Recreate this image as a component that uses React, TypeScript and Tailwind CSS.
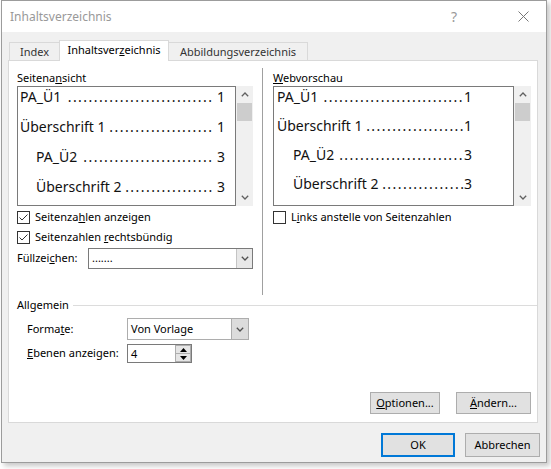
import React from 'react';

// Word-Dialog "Inhaltsverzeichnis" (Windows 10 Look)

type Entry = { text: string; page: string; level: number; dots: number };

// Anzahl der Füllpunkte je Zeile ist auf die Breite der Vorschau abgestimmt
const ENTRIES: Entry[] = [
  { text: 'PA_Ü1', page: '1', level: 0, dots: 28 },
  { text: 'Überschrift 1', page: '1', level: 0, dots: 20 },
  { text: 'PA_Ü2', page: '3', level: 1, dots: 25 },
  { text: 'Überschrift 2', page: '3', level: 1, dots: 17 },
];

const WEB_ENTRIES: Entry[] = [
  { text: 'PA_Ü1', page: '1', level: 0, dots: 27 },
  { text: 'Überschrift 1', page: '1', level: 0, dots: 19 },
  { text: 'PA_Ü2', page: '3', level: 1, dots: 24 },
  { text: 'Überschrift 2', page: '3', level: 1, dots: 16 },
  { text: 'PA_Ü3', page: '5', level: 2, dots: 21 },
];

function ChevronUp() {
  return (
    <svg width="8" height="5" viewBox="0 0 8 5">
      <path d="M0.8 4.2 L4 1 L7.2 4.2" fill="none" stroke="#606060" strokeWidth="1.3" />
    </svg>
  );
}

function ChevronDown({ color = '#606060' }: { color?: string }) {
  return (
    <svg width="8" height="5" viewBox="0 0 8 5">
      <path d="M0.8 0.8 L4 4 L7.2 0.8" fill="none" stroke={color} strokeWidth="1.3" />
    </svg>
  );
}

function Scrollbar() {
  return (
    <div className="flex h-full w-[17px] flex-col bg-[#f0f0f0]">
      <div className="flex h-[17px] items-center justify-center">
        <ChevronUp />
      </div>
      <div className="mx-[1px] h-[18px] bg-[#cdcdcd]" />
      <div className="flex-1" />
      <div className="flex h-[17px] items-center justify-center">
        <ChevronDown />
      </div>
    </div>
  );
}

function PreviewList({
  entries,
  indent,
  rowHeight,
  padLeft,
  padRight,
  web,
}: {
  entries: Entry[];
  indent: number;
  rowHeight: string;
  padLeft: number;
  padRight: string;
  web?: boolean;
}) {
  return (
    <div className={`h-full flex-1 overflow-hidden border border-[#7a7a7a] bg-white ${padRight}`}>
      {entries.map((e, i) => (
        <div
          key={i}
          className={`flex ${rowHeight} items-start text-[14px] leading-[20px] text-[#111]`}
          style={{ paddingLeft: padLeft + e.level * indent }}
        >
          <span className="whitespace-nowrap">{e.text}&nbsp;</span>
          <span className="min-w-0 flex-1 whitespace-nowrap text-right tracking-[1.45px]">
            {'.'.repeat(e.dots)}
          </span>
          <span className="whitespace-nowrap">
            {web ? '' : '\u00a0'}
            {e.page}
          </span>
        </div>
      ))}
    </div>
  );
}

function Checkbox({ checked, children }: { checked?: boolean; children: React.ReactNode }) {
  return (
    <div className="flex h-[16px] items-center">
      <div className="flex h-[13px] w-[13px] items-center justify-center border border-[#333] bg-white">
        {checked && (
          <svg width="11" height="11" viewBox="0 0 11 11">
            <path d="M1.5 5.5 L4 8 L9.5 2.5" fill="none" stroke="#333" strokeWidth="1" />
          </svg>
        )}
      </div>
      <span className="ml-[5px] whitespace-nowrap">{children}</span>
    </div>
  );
}

function Button({
  children,
  w,
  h,
  primary,
}: {
  children: React.ReactNode;
  w: string;
  h: string;
  primary?: boolean;
}) {
  return (
    <div
      className={`flex ${w} ${h} items-center justify-center bg-[#e1e1e1] ${
        primary ? 'border-2 border-[#0078d7]' : 'border border-[#adadad]'
      }`}
    >
      {children}
    </div>
  );
}

export default function App() {
  return (
    <div className="h-[469px] w-[551px] bg-white pl-px font-['Noto_Sans',sans-serif] text-[11px] text-black">
      <div className="flex h-[463px] w-[546px] flex-col border border-[#9c9c9c] shadow-[3px_3px_5px_rgba(0,0,0,0.22)]">
        {/* Titelleiste */}
        <div className="flex h-[31px] items-center bg-white pl-[8px]">
          <span className="text-[12px] text-[#999]">Inhaltsverzeichnis</span>
          <div className="ml-auto mr-[23px] flex w-[46px] justify-center text-[14px] text-[#999]">?</div>
          <div className="flex w-[46px] justify-center">
            <svg width="11" height="11" viewBox="0 0 11 11">
              <path d="M0.5 0.5 L10.5 10.5 M10.5 0.5 L0.5 10.5" stroke="#777" strokeWidth="1" />
            </svg>
          </div>
        </div>

        <div className="flex flex-1 flex-col bg-[#f0f0f0] px-[6px] pt-[8px]">
          {/* Reiter */}
          <div className="flex h-[21px] items-end">
            <div className="ml-px flex h-[19px] w-[51px] items-center justify-center border border-b-0 border-[#d9d9d9] text-[#333]">
              Index
            </div>
            <div className="relative z-10 -ml-px flex h-[21px] w-[110px] items-center justify-center border border-b-0 border-[#d9d9d9] bg-white pb-[2px]">
              Inhaltsver<u>z</u>eichnis
            </div>
            <div className="-ml-px flex h-[19px] w-[140px] items-center justify-center border border-b-0 border-[#d9d9d9] text-[#333]">
              Abbildungsverzeichnis
            </div>
          </div>

          {/* Registerinhalt */}
          <div className="-mt-px flex h-[363px] w-[530px] flex-col border border-[#d9d9d9] bg-white">
            <div className="flex">
              <div className="ml-[8px] flex w-[236px] flex-col">
                <div className="mt-[8px] h-[17px] leading-[17px]">
                  Seitena<u>n</u>sicht
                </div>
                <div className="flex h-[120px]">
                  <PreviewList entries={ENTRIES} indent={16} rowHeight="h-[30px]" padLeft={2} padRight="pr-[10px]" />
                  <Scrollbar />
                </div>
                <div className="mt-[3px]">
                  <Checkbox checked>
                    Seitenza<u>h</u>len anzeigen
                  </Checkbox>
                </div>
                <div className="mt-[4px]">
                  <Checkbox checked>
                    Seitenzahlen <u>r</u>echtsbündig
                  </Checkbox>
                </div>
                <div className="mt-[3px] flex h-[21px] items-center">
                  <span>
                    Füllzei<u>c</u>hen:
                  </span>
                  <div className="ml-auto flex h-full w-[165px] border border-[#7a7a7a] bg-white">
                    <span className="flex-1 pl-[3px] leading-[18px]">.......</span>
                    <div className="flex w-[16px] items-center justify-center border-l border-[#c4c4c4] bg-[#e8e8e8]">
                      <ChevronDown color="#505050" />
                    </div>
                  </div>
                </div>
              </div>

              <div className="ml-[9px] mt-[7px] h-[227px] w-px bg-[#a0a0a0]" />

              <div className="ml-[10px] flex w-[258px] flex-col">
                <div className="mt-[8px] h-[17px] leading-[17px]">
                  <u>W</u>ebvorschau
                </div>
                <div className="flex h-[120px]">
                  <PreviewList
                    entries={WEB_ENTRIES}
                    indent={16}
                    rowHeight="h-[29px]"
                    padLeft={3}
                    padRight="pr-[41px]"
                    web
                  />
                  <Scrollbar />
                </div>
                <div className="mt-[3px]">
                  <Checkbox>
                    L<u>i</u>nks anstelle von Seitenzahlen
                  </Checkbox>
                </div>
              </div>
            </div>

            {/* Allgemein */}
            <div className="mt-[2px] flex h-[16px] items-center pl-[8px]">
              <span>Allgemein</span>
              <div className="ml-[4px] h-px flex-1 bg-[#dcdcdc]" />
            </div>
            <div className="mt-[5px] flex h-[22px] items-center pl-[18px]">
              <span className="w-[100px]">
                Forma<u>t</u>e:
              </span>
              <div className="flex h-full w-[122px] border border-[#adadad] bg-white">
                <span className="flex-1 pl-[3px] leading-[20px]">Von Vorlage</span>
                <div className="flex w-[17px] items-center justify-center border-l border-[#adadad] bg-[#dcdcdc]">
                  <ChevronDown color="#505050" />
                </div>
              </div>
            </div>
            <div className="mt-[4px] flex h-[19px] items-center pl-[18px]">
              <span className="w-[100px]">
                <u>E</u>benen anzeigen:
              </span>
              <div className="flex h-full w-[65px] border border-[#7a7a7a] bg-white">
                <span className="flex-1 pl-[3px] leading-[17px]">4</span>
                <div className="flex w-[16px] flex-col">
                  <div className="flex flex-1 items-center justify-center border border-[#adadad] bg-[#e5e5e5]">
                    <svg width="7" height="4" viewBox="0 0 7 4">
                      <path d="M0 4 L3.5 0 L7 4 Z" fill="#000" />
                    </svg>
                  </div>
                  <div className="flex flex-1 items-center justify-center border border-t-0 border-[#adadad] bg-[#e5e5e5]">
                    <svg width="7" height="4" viewBox="0 0 7 4">
                      <path d="M0 0 L3.5 4 L7 0 Z" fill="#000" />
                    </svg>
                  </div>
                </div>
              </div>
            </div>

            <div className="mt-auto flex justify-end gap-[16px] pb-[8px] pr-[6px]">
              <Button w="w-[70px]" h="h-[22px]">
                <span>
                  <u>O</u>ptionen...
                </span>
              </Button>
              <Button w="w-[75px]" h="h-[22px]">
                <span>
                  <u>Ä</u>ndern...
                </span>
              </Button>
            </div>
          </div>

          {/* Dialogschaltflächen */}
          <div className="mt-[10px] flex justify-end gap-[10px]">
            <Button w="w-[74px]" h="h-[24px]" primary>
              OK
            </Button>
            <Button w="w-[75px]" h="h-[24px]">
              Abbrechen
            </Button>
          </div>
        </div>
      </div>
    </div>
  );
}
